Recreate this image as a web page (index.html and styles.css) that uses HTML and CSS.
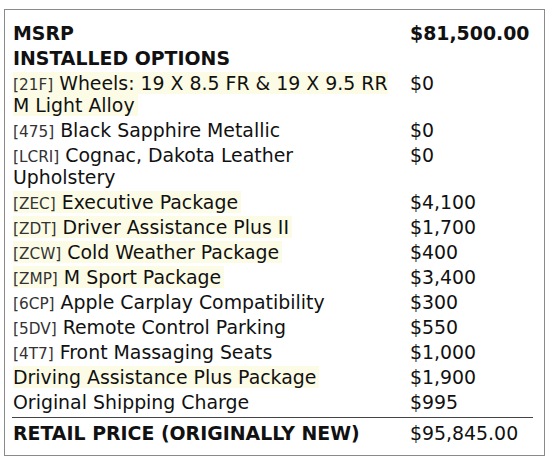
FILE: index.html
```html
<!DOCTYPE html>
<html>
<head>
<meta charset="utf-8">
<link rel="stylesheet" href="styles.css">
</head>
<body>
<div class="box">
  <table class="sheet">
    <tr class="bold"><td class="name">MSRP</td><td class="price">$81,500.00</td></tr>
    <tr class="bold"><td class="name">INSTALLED OPTIONS</td><td class="price"></td></tr>
    <tr><td class="name"><span class="hl"><span class="code">[21F]</span> Wheels: 19 X 8.5 FR &amp; 19 X 9.5 RR M Light Alloy</span></td><td class="price">$0</td></tr>
    <tr><td class="name"><span class="code">[475]</span> Black Sapphire Metallic</td><td class="price">$0</td></tr>
    <tr><td class="name"><span class="code">[LCRI]</span> Cognac, Dakota Leather Upholstery</td><td class="price">$0</td></tr>
    <tr><td class="name"><span class="hl"><span class="code">[ZEC]</span> Executive Package</span></td><td class="price">$4,100</td></tr>
    <tr><td class="name"><span class="hl"><span class="code">[ZDT]</span> Driver Assistance Plus II</span></td><td class="price">$1,700</td></tr>
    <tr><td class="name"><span class="hl"><span class="code">[ZCW]</span> Cold Weather Package</span></td><td class="price">$400</td></tr>
    <tr><td class="name"><span class="hl"><span class="code">[ZMP]</span> M Sport Package</span></td><td class="price">$3,400</td></tr>
    <tr><td class="name"><span class="code">[6CP]</span> Apple Carplay Compatibility</td><td class="price">$300</td></tr>
    <tr><td class="name"><span class="code">[5DV]</span> Remote Control Parking</td><td class="price">$550</td></tr>
    <tr><td class="name"><span class="code">[4T7]</span> Front Massaging Seats</td><td class="price">$1,000</td></tr>
    <tr><td class="name"><span class="hl">Driving Assistance Plus Package</span></td><td class="price">$1,900</td></tr>
    <tr class="last"><td class="name">Original Shipping Charge</td><td class="price">$995</td></tr>
    <tr class="total"><td class="name">RETAIL PRICE (ORIGINALLY NEW)</td><td class="price">$95,845.00</td></tr>
  </table>
</div>
</body>
</html>
```

FILE: styles.css
```css
html, body {
  margin: 0;
  padding: 0;
  background: #ffffff;
}

body {
  font-family: "DejaVu Sans", sans-serif;
  color: #111111;
}

.box {
  margin: 9px 0 0 4px;
  width: 541px;
  height: 447px;
  border: 1px solid #8a8a8a;
  padding: 11px 0 0 7px;
  box-sizing: border-box;
}

.sheet {
  border-collapse: collapse;
  width: 521px;
  table-layout: fixed;
}

.sheet td {
  padding: 1px 0 2px;
  font-size: 18.9px;
  line-height: 22px;
  vertical-align: top;
}

.sheet td.name {
  width: 398px;
  padding-left: 1px;
  padding-right: 14px;
  box-sizing: border-box;
}

.sheet td.price {
  width: 123px;
}

.bold td {
  font-weight: bold;
}

.hl {
  background: #fcfce6;
  padding-right: 3px;
}

.code {
  font-size: 15.3px;
  line-height: 14px;
  color: #333333;
}

.last td {
  padding-bottom: 4px;
}

.total td {
  border-top: 1px solid #444444;
  padding-top: 4px;
}

.total td.name {
  font-weight: bold;
}
```
